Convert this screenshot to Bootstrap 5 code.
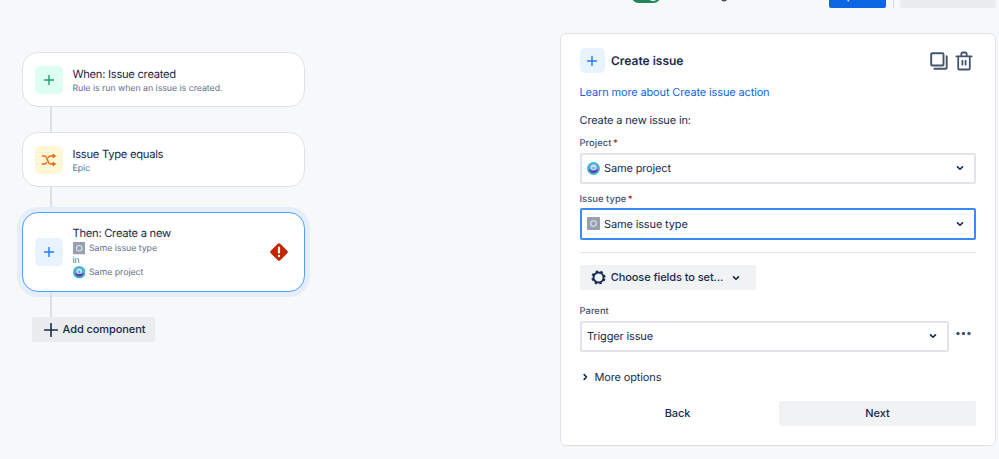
<!DOCTYPE html>
<html lang="en">
<head>
    <meta charset="UTF-8">
    <meta name="viewport" content="width=device-width, initial-scale=1.0">
    <title>Automation rule</title>
    <link href="https://cdn.jsdelivr.net/npm/bootstrap@5.3.0/dist/css/bootstrap.min.css" rel="stylesheet">
    <style>
        body {
            font-family: "Inter", sans-serif;
            font-size: 11px;
            line-height: 16px;
            letter-spacing: -.14px;
            color: #172b4d;
            background: #f7f8fa;
            height: 459px;
            overflow: hidden;
            text-rendering: geometricPrecision;
        }
        svg { display: block; flex-shrink: 0; }
        .topbar { height: 8px; padding-right: 3px; overflow: hidden; }
        .toggle { width: 30px; height: 16px; border-radius: 8px; background: #1f845a; padding: 2px; margin-bottom: 5px; }
        .knob { width: 12px; height: 12px; border-radius: 50%; background: #fff; }
        .status { width: 168px; padding-left: 17px; margin-bottom: 5px; }
        .btn { --bs-btn-font-size: 11px; --bs-btn-font-weight: 500; --bs-btn-border-width: 0; --bs-btn-border-radius: 2px; --bs-btn-color: #172b4d; --bs-btn-padding-y: 0; --bs-btn-padding-x: 0; line-height: 25px; height: 25px; letter-spacing: -.08px; }
        .btn-update { width: 57px; background: #0c66e4; color: #fff; line-height: 21px; }
        .btn-return { width: 96px; background: #ebecee; line-height: 21px; }
        .split { width: 1px; height: 25px; background: #d5d9e0; margin: 0 6px 0 7px; }

        .chain { width: 283px; margin: 44px 0 0 22px; }
        .step { height: 55px; padding: 0 13px 0 12px; border: 1px solid #dfe1e6; border-radius: 16px; background: #fff; }
        .step-active { height: 80px; border-color: #579dff; box-shadow: 0 0 0 5px #e4effd; }
        .step-body { padding-top: 2px; }
        .step-title { font-size: 11.2px; line-height: 16px; letter-spacing: -.27px; }
        .step-text { font-size: 8.8px; line-height: 12px; color: #626f86; letter-spacing: -.04px; }
        .step-sub { padding-top: 1px; }
        .step-word { line-height: 11px; }
        .tile { width: 28px; height: 28px; border-radius: 5px; margin-right: 9.5px; flex-shrink: 0; }
        .tile-green { background: #dcfff1; color: #22a06b; }
        .tile-yellow { background: #fff7d6; color: #e56910; }
        .tile-blue { background: #e9f2ff; color: #1d7afc; }
        .tile-sm { width: 25px; height: 25px; margin-right: 6.5px; }
        .link-line { width: 1.5px; height: 25px; margin-left: 28px; background: #dcdfe4; }
        .btn-add { width: 123px; margin-left: 10px; background: #ebecee; }

        .panel { width: 436px; height: 413px; margin: 25px 3px 0 0; padding: 14px 19px 0 18.5px; border: 1px solid #dfe1e6; border-radius: 6px; background: #fff; }
        .panel-title { font-size: 12px; font-weight: 600; letter-spacing: 0; }
        .panel-icon { color: #44546f; }
        .more-link { color: #0c66e4; text-decoration: none; }
        .field-label { font-size: 9.4px; font-weight: 500; line-height: 12px; letter-spacing: .04px; color: #44546f; }
        .req { color: #ae2a19; margin-left: -1px; }
        .picker { height: 31.5px; border: 2px solid #e2e4e9; border-radius: 2px; padding: 0 9px 0 5.5px; }
        .picker-focus { border-color: #388bff; }
        .rule-line { height: 1px; background: #e6e8ec; }
        .btn-soft { background: #f1f2f4; }
        .btn-fields { width: 176px; }
    </style>
</head>
<body>
    <svg width="0" height="0" class="position-absolute">
        <symbol id="plus" viewBox="0 0 10 10"><path d="M5 .6v8.8M.6 5h8.8" fill="none" stroke="currentColor" stroke-width="1.4" stroke-linecap="round"/></symbol>
        <symbol id="chevron" viewBox="0 0 8 8"><path d="M2 3.1 4 5l2-1.9" fill="none" stroke="currentColor" stroke-width="1.3" stroke-linecap="round" stroke-linejoin="round"/></symbol>
        <symbol id="type" viewBox="0 0 13 13"><rect width="13" height="13" rx="1" fill="#97a0af"/><circle cx="6.5" cy="6.5" r="2.8" fill="none" stroke="#dfe3e8" stroke-width="1.1"/></symbol>
        <symbol id="project" viewBox="0 0 13 13">
            <circle cx="6.5" cy="6.5" r="6.5" fill="#35c0c0"/>
            <circle cx="6.5" cy="6.3" r="4.5" fill="#8f8fe6"/>
            <path d="M1.9 7q1.2 1.4 4.6 1.4T11.1 7q-.3 3.7-4.6 4Q2.2 10.7 1.9 7z" fill="#6a35b8"/>
            <circle cx="6.5" cy="5.4" r="2.8" fill="#b9ecf5"/>
            <path d="M5.6 4.9h1.8v2.300H5.600z" fill="#5c9be0"/>
        </symbol>
    </svg>

    <div class="topbar d-flex justify-content-end align-items-end">
        <div class="toggle d-flex justify-content-end"><div class="knob"></div></div>
        <div class="status fw-medium">No changes</div>
        <button class="btn btn-update">Update</button>
        <div class="split"></div>
        <button class="btn btn-return">Return to list</button>
    </div>

    <div class="d-flex justify-content-between align-items-start">
        <div class="chain">
            <div class="step d-flex align-items-center">
                <div class="tile tile-green d-flex align-items-center justify-content-center">
                    <svg width="10" height="10"><use href="#plus"/></svg>
                </div>
                <div class="step-body">
                    <div class="step-title">When: Issue created</div>
                    <div class="step-text step-sub">Rule is run when an issue is created.</div>
                </div>
            </div>
            <div class="link-line"></div>
            <div class="step d-flex align-items-center">
                <div class="tile tile-yellow d-flex align-items-center justify-content-center">
                    <svg width="16" height="14" viewBox="0 0 16 14" fill="none" stroke="currentColor" stroke-width="1.5" stroke-linecap="round" stroke-linejoin="round">
                        <path d="M1.3 3h2q1.5 0 2.2 1.5l2 5Q8.2 11 9.7 11h4M1.3 11h2q1.4 0 2.1-1.3M7.4 4.5Q8.2 3 9.7 3h4"/>
                        <path d="M12.3 1.4 14.4 3l-2.1 1.6zM12.3 9.4l2.1 1.6-2.1 1.6z" fill="currentColor" stroke-width="1"/>
                    </svg>
                </div>
                <div class="step-body">
                    <div class="step-title">Issue Type equals</div>
                    <div class="step-text step-sub">Epic</div>
                </div>
            </div>
            <div class="link-line"></div>
            <div class="step step-active d-flex align-items-center">
                <div class="tile tile-blue d-flex align-items-center justify-content-center">
                    <svg width="10" height="10"><use href="#plus"/></svg>
                </div>
                <div class="flex-grow-1">
                    <div class="step-title">Then: Create a new</div>
                    <div class="step-text step-sub d-flex align-items-center"><svg width="12.5" height="12.5" class="me-1"><use href="#type"/></svg><span class="step-sub">Same issue type</span></div>
                    <div class="step-text step-word">in</div>
                    <div class="step-text d-flex align-items-center"><svg width="12.5" height="12.5" class="me-1"><use href="#project"/></svg><span class="step-sub">Same project</span></div>
                </div>
                <svg width="24" height="24" viewBox="0 0 24 24">
                    <path d="M12 5l7 7-7 7-7-7z" fill="#bf2600" stroke="#bf2600" stroke-width="3.5" stroke-linejoin="round"/>
                    <path d="M12 7.5v5" stroke="#fff" stroke-width="2.2" stroke-linecap="round"/><circle cx="12" cy="16" r="1.2" fill="#fff"/>
                </svg>
            </div>
            <div class="link-line"></div>
            <button class="btn btn-add d-flex align-items-center justify-content-center">
                <svg width="14" height="14" viewBox="0 0 14 14" style="margin-left:2px; margin-right:5px"><path d="M7 .7v12.6M.7 7h12.6" stroke="currentColor" stroke-width="1.6" stroke-linecap="round"/></svg>
                <span>Add component</span>
            </button>
        </div>

        <div class="panel">
            <div class="d-flex align-items-center">
                <div class="tile tile-sm tile-blue d-flex align-items-center justify-content-center">
                    <svg width="10" height="10"><use href="#plus"/></svg>
                </div>
                <div class="panel-title flex-grow-1">Create issue</div>
                <svg class="panel-icon" width="18" height="18" viewBox="0 0 18 18" fill="none" stroke="currentColor" stroke-width="1.9" stroke-linecap="round" stroke-linejoin="round" style="margin-right:7px">
                    <rect x="1.2" y="1.2" width="12.3" height="12.3" rx="1"/><path d="M16.7 4.3v11.4q0 1-1 1H4.3"/>
                </svg>
                <svg class="panel-icon" width="18" height="20" viewBox="0 0 18 20" fill="none" stroke="currentColor" stroke-width="1.8" stroke-linecap="round" stroke-linejoin="round" style="margin-right:3px">
                    <path d="M1.3 5.3h15.4M6.3 5V3.2q0-1.7 1.7-1.7h2q1.7 0 1.7 1.7V5M3.2 5.5v12q0 1 1 1h9.6q1 0 1-1v-12M7.4 9.6v4.1M10.6 9.6v4.1"/>
                </svg>
            </div>
            <div style="margin-top:11px"><a href="#" class="more-link">Learn more about Create issue action</a></div>
            <div style="margin-top:12px">Create a new issue in:</div>
            <div class="field-label" style="margin-top:9.5px">Project <span class="req">*</span></div>
            <div class="picker d-flex align-items-center" style="margin-top:3px">
                <svg width="13" height="13" class="me-1"><use href="#project"/></svg>
                <span class="flex-grow-1">Same project</span>
                <svg width="10" height="10"><use href="#chevron"/></svg>
            </div>
            <div class="field-label" style="margin-top:9.5px">Issue type <span class="req">*</span></div>
            <div class="picker picker-focus d-flex align-items-center" style="margin-top:2.5px">
                <svg width="13" height="13" class="me-1"><use href="#type"/></svg>
                <span class="flex-grow-1">Same issue type</span>
                <svg width="10" height="10"><use href="#chevron"/></svg>
            </div>
            <div class="rule-line" style="margin-top:12.5px"></div>
            <button class="btn btn-soft btn-fields d-flex align-items-center justify-content-center" style="margin-top:12px">
                <svg width="15" height="15" viewBox="0 0 15 15" style="margin-left:-3px; margin-right:5px">
                    <circle cx="7.5" cy="7.5" r="5" fill="none" stroke="currentColor" stroke-width="1.9"/>
                    <circle cx="7.5" cy="7.5" r="6.2" fill="none" stroke="currentColor" stroke-width="1.8" stroke-dasharray="2.3 2.569" stroke-dashoffset="-1.285"/>
                </svg>
                <span>Choose fields to set...</span>
                <svg width="10" height="10" style="margin-left:8px"><use href="#chevron"/></svg>
            </button>
            <div class="field-label" style="margin-top:15.5px">Parent</div>
            <div class="d-flex" style="margin-top:3px">
                <div class="picker d-flex align-items-center flex-grow-1">
                    <span class="flex-grow-1">Trigger issue</span>
                    <svg width="10" height="10"><use href="#chevron"/></svg>
                </div>
                <svg class="panel-icon" width="15" height="5" viewBox="0 0 15 5" fill="currentColor" style="margin:10px 5px 0 7px"><circle cx="2" cy="2.5" r="1.7"/><circle cx="7.5" cy="2.5" r="1.7"/><circle cx="13" cy="2.5" r="1.7"/></svg>
            </div>
            <div class="d-flex align-items-center" style="margin-top:16.5px">
                <svg width="10" height="10" viewBox="0 0 10 10" style="margin-right:5px"><path d="M4.2 2.7 6.5 5 4.2 7.3" fill="none" stroke="currentColor" stroke-width="1.7" stroke-linecap="round" stroke-linejoin="round"/></svg>
                <span>More options</span>
            </div>
            <div class="d-flex" style="margin-top:16px; gap:3.5px">
                <button class="btn" style="width:196px">Back</button>
                <button class="btn btn-soft flex-grow-1">Next</button>
            </div>
        </div>
    </div>
    <script src="https://cdn.jsdelivr.net/npm/bootstrap@5.3.0/dist/js/bootstrap.bundle.min.js"></script>
</body>
</html>
